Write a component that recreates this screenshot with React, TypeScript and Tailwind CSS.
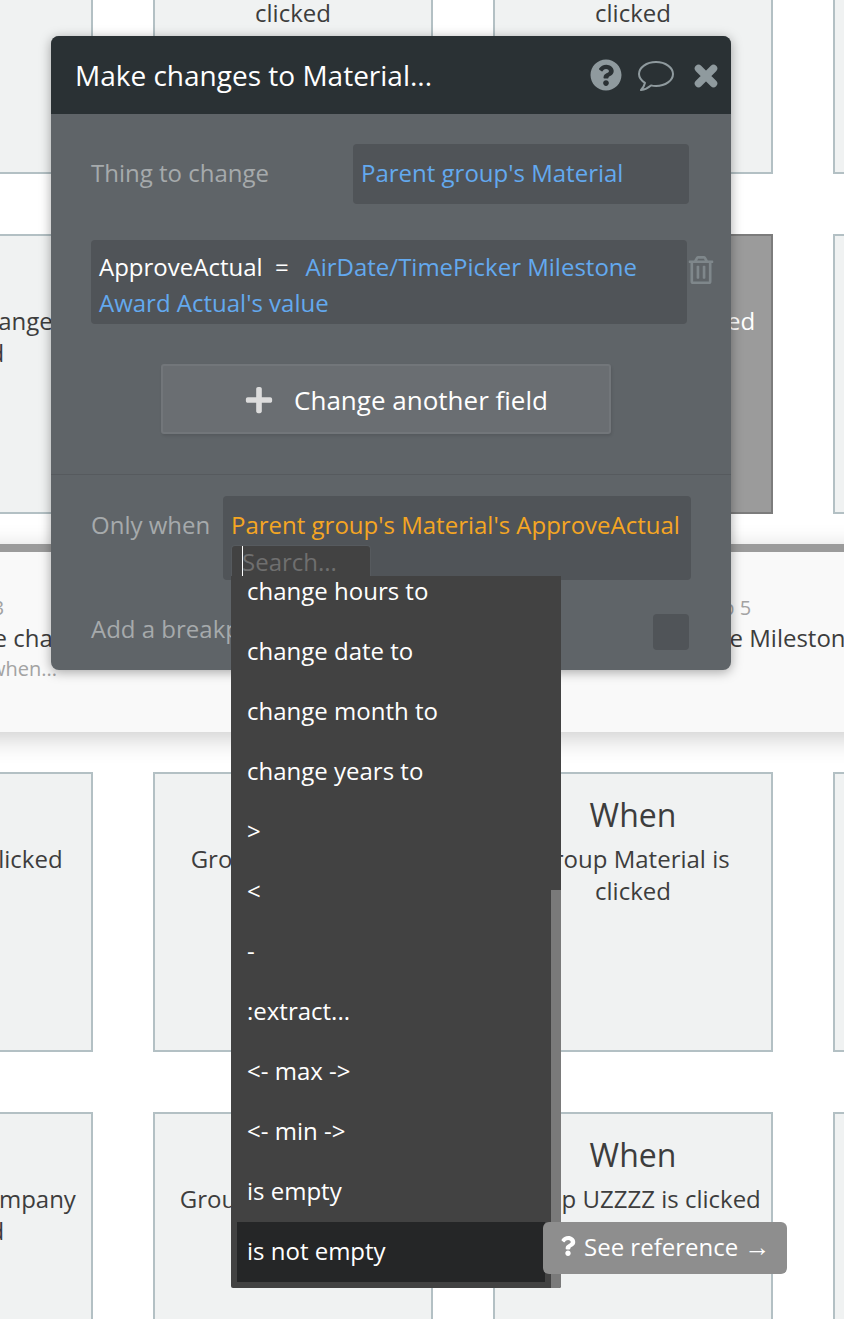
import React from "react";
import { FaQuestionCircle, FaPlus, FaQuestion, FaRegTrashAlt } from "react-icons/fa";

const cards = [
  { pos: "left-[-187px] top-[-106px]", lines: ["Group Status is", "clicked"] },
  { pos: "left-[153px] top-[-106px]", lines: ["Group Status is", "clicked"] },
  { pos: "left-[493px] top-[-106px]", lines: ["Group Company is", "clicked"] },
  { pos: "left-[833px] top-[-106px]", lines: ["Group Status is", "clicked"] },
  { pos: "left-[-187px] top-[234px]", lines: ["Group Set change", "is clicked"], nudge: true },
  { pos: "left-[153px] top-[234px]", lines: ["Group Status is", "clicked"] },
  { pos: "left-[493px] top-[234px]", lines: ["Button Agreed clicked"], selected: true },
  { pos: "left-[833px] top-[234px]", lines: ["Group Status is", "clicked"] },
  { pos: "left-[-187px] top-[772px]", lines: ["Button AB is clicked"] },
  { pos: "left-[153px] top-[772px]", lines: ["Group Materials is"] },
  { pos: "left-[493px] top-[772px]", lines: ["Group Material is", "clicked"] },
  { pos: "left-[833px] top-[772px]", lines: ["Group Status is", "clicked"] },
  { pos: "left-[-187px] top-[1112px]", lines: ["Group Main Company", "is clicked"], nudge: true },
  { pos: "left-[153px] top-[1112px]", lines: ["Group Companies is", "clicked"] },
  { pos: "left-[493px] top-[1112px]", lines: ["Group UZZZZ is clicked"] },
  { pos: "left-[833px] top-[1112px]", lines: ["Group Status is", "clicked"] },
];

const options = [
  "change hours to",
  "change date to",
  "change month to",
  "change years to",
  ">",
  "<",
  "-",
  ":extract...",
  "<- max ->",
  "<- min ->",
  "is empty",
  "is not empty",
];

const App = () => {
  return (
    <div className="relative w-[844px] h-[1319px] overflow-hidden bg-white font-['Open_Sans',sans-serif]">
      {/* workflow canvas */}
      {cards.map((card, i) => (
        <div
          key={i}
          className={
            "absolute w-[280px] h-[280px] border-2 px-2 pt-[21px] text-center " +
            card.pos +
            " " +
            (card.selected
              ? "bg-[#9b9b9b] border-[#7c7c7c] text-white"
              : "bg-[#f0f2f2] border-[#b3c0c4] text-[#3d3d3d]")
          }
        >
          <div className="text-[32px] leading-[40px]">When</div>
          <div className="mt-[8px] text-[24px] leading-[32px]">
            {card.lines.map((line, n) => (
              <div key={line} className={"whitespace-nowrap " + (card.nudge && n === 1 ? "pl-[3px]" : "")}>
                {line}
              </div>
            ))}
          </div>
        </div>
      ))}

      {/* step band */}
      <div className="absolute left-[-40px] top-[544px] w-[924px] h-[188px] bg-[#f9f9f9] border-t-8 border-[#9b9b9b] shadow-[0_6px_24px_rgba(0,0,0,0.2)]">
        <div className="absolute left-[-14px] top-[42px] whitespace-nowrap">
          <div className="text-[20px] leading-[28px] text-[#a3a3a3]">Step 3</div>
          <div className="text-[24px] leading-[32px] text-[#3d3d3d]">Make changes to...</div>
          <div className="-ml-[4px] text-[20px] leading-[29px] text-[#a3a3a3]">Only when...</div>
        </div>
        <div className="absolute left-[733px] top-[42px] whitespace-nowrap">
          <div className="text-[20px] leading-[28px] text-[#a3a3a3]">Step 5</div>
          <div className="-ml-[11px] text-[24px] leading-[32px] text-[#3d3d3d]">Make Milestone</div>
        </div>
      </div>

      {/* property editor */}
      <div className="absolute left-[51px] top-[36px] w-[680px] h-[634px] rounded-lg bg-[#5f6468] shadow-[0_2px_12px_rgba(0,0,0,0.35)]">
        <div className="h-[78px] rounded-t-lg bg-[#2a3134] flex items-center pl-[24px] pr-[13px]">
          <div className="text-[28px] text-white flex-1">Make changes to Material...</div>
          <div className="flex items-center text-[#8f9a9e]">
            <FaQuestionCircle size={32} />
            <svg width="38" height="32" viewBox="0 0 38 32" className="ml-[15px] mt-[2px]" fill="none" stroke="currentColor" strokeWidth="2" strokeLinejoin="round">
              <path d="M19 2C28.5 2 36 7.5 36 14C36 20.5 28.5 26 19 26C17 26 15.5 25.8 14 25.4C11 28 7.5 29.5 4 30C6 28 7.5 25.5 8 22.8C4.3 20.5 2 17.5 2 14C2 7.5 9.5 2 19 2Z" />
            </svg>
            <svg width="24" height="24" viewBox="0 0 24 24" className="ml-[19px] mt-[2px]" stroke="currentColor" strokeWidth="7.5" strokeLinecap="round">
              <path d="M4.5 4.5L19.5 19.5M19.5 4.5L4.5 19.5" />
            </svg>
          </div>
        </div>

        <div className="h-[361px] border-b border-[#565a5e] pt-[30px] pl-[40px] pr-[42px]">
          <div className="flex items-center justify-between h-[60px]">
            <div className="pb-[2px] text-[24px] text-[#a6aaac]">Thing to change</div>
            <div className="w-[336px] h-[60px] pb-[2px] rounded-sm bg-[#505458] flex items-center px-2 text-[24px] text-[#63a9ef]">
              Parent group's Material
            </div>
          </div>

          <div className="relative mt-[36px] w-[596px] h-[84px] rounded-sm bg-[#505458] px-2 pt-[9px] text-[24px] leading-[36px] text-white">
            ApproveActual&nbsp; =&nbsp;&nbsp; <span className="-ml-[2px] text-[#63a9ef]">AirDate/TimePicker Milestone Award Actual's value</span>
            <FaRegTrashAlt size={28} className="absolute left-[596px] top-[16px] text-[#7f878b]" />
          </div>

          <div className="ml-[70px] mt-[40px] w-[450px] h-[70px] pl-[20px] pt-[2px] rounded-[3px] bg-[#6a6e72] border-2 border-[#72767a] shadow-[1px_2px_3px_rgba(0,0,0,0.1)] flex items-center justify-center gap-[20px] text-[26px] text-white">
            <FaPlus size={30} className="text-[#dcdcdc]" />
            <span>Change another field</span>
          </div>
        </div>

        <div className="pt-[21px] pl-[40px] pr-[40px]">
          <div className="flex">
            <div className="w-[132px] pt-[12px] text-[24px] leading-[34px] text-[#a6aaac]">Only when</div>
            <div className="w-[468px] h-[84px] rounded-sm bg-[#505458] px-2 pt-[12px] text-[24px] leading-[34px] text-[#f5a623] whitespace-nowrap">
              Parent group's Material's ApproveActual
            </div>
          </div>
          <div className="mt-[34px] pr-[2px] flex items-center justify-between">
            <div className="-mt-[6px] text-[24px] text-[#a6aaac]">Add a breakpoint in debug mode</div>
            <div className="w-[36px] h-[36px] rounded-sm bg-[#505458]" />
          </div>
        </div>
      </div>

      {/* expression search + operator list */}
      <div className="absolute left-[231px] top-[545px] w-[140px] h-[31px] rounded-t-[4px] bg-[#424242] border-t border-x border-[#565a5e] text-[24px] leading-[31px] text-[#6f6f6f] pl-[10px]">
        Search...
        <div className="absolute left-[10px] top-0 w-[1px] h-[31px] bg-white" />
      </div>
      <div className="absolute left-[231px] top-[576px] w-[330px] h-[712px] rounded-b-[2px] overflow-hidden bg-[#424242] pl-[6px] pr-[16px]">
        <div className="-mt-[14px]">
          {options.map((opt, i) => (
            <div
              key={opt}
              className={
                "h-[60px] pb-[2px] flex items-center px-[10px] text-[24px] text-white " +
                (i === options.length - 1 ? "bg-[#252627]" : "")
              }
            >
              {opt}
            </div>
          ))}
        </div>
        <div className="absolute right-0 top-[314px] bottom-0 w-[10px] bg-[#7a7a7a]" />
      </div>

      {/* reference tip */}
      <div className="absolute left-[543px] top-[1222px] w-[244px] h-[52px] pb-[2px] rounded-[6px] bg-[#8e8e8e] flex items-center pl-[15px] text-[24px] text-white">
        <FaQuestion size={20} className="mr-[6px] -mt-[2px]" />
        <span className="whitespace-nowrap">
          See reference <span className="font-['Liberation_Sans',sans-serif] text-[26px] leading-none">→</span>
        </span>
      </div>
    </div>
  );
};

export default App;
